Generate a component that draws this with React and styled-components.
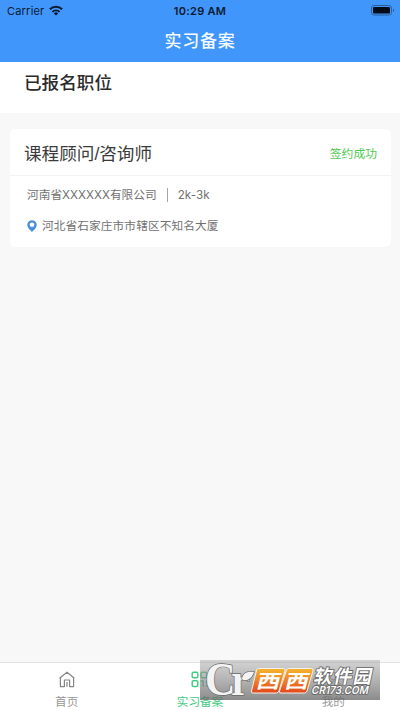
import styled, { createGlobalStyle } from 'styled-components';

const GlobalStyle = createGlobalStyle`
  * {
    box-sizing: border-box;
  }

  body {
    margin: 0;
    background: #f8f8f8;
    font-family: Inter, 'Noto Sans CJK SC', sans-serif;
  }
`;

const Page = styled.div`
  position: relative;
  display: flex;
  flex-direction: column;
  width: 400px;
  height: 710px;
  overflow: hidden;
  background: #f8f8f8;
`;

const Header = styled.header`
  height: 62px;
  background: #4196fb;
`;

const StatusBar = styled.div`
  display: grid;
  grid-template-columns: 1fr auto 1fr;
  align-items: center;
  height: 20px;
  padding: 1px 5px 0 7px;
  color: #0b1a30;
  font-size: 11px;
  line-height: 14px;

  .carrier {
    display: flex;
    align-items: center;
    gap: 5px;
    letter-spacing: 0.2px;
  }

  .time {
    margin-left: -2px;
    font-weight: 600;
    letter-spacing: 0.3px;
  }

  .battery {
    justify-self: end;
  }

  svg {
    display: block;
  }
`;

const NavTitle = styled.h1`
  margin: 0;
  color: #f4faff;
  font-size: 17px;
  font-weight: 500;
  line-height: 42px;
  letter-spacing: 0.7px;
  text-align: center;
`;

const SectionTitle = styled.h2`
  height: 51px;
  margin: 0;
  padding-left: 24px;
  background: #fff;
  color: #2b2b2b;
  font-size: 17.6px;
  font-weight: 500;
  line-height: 41px;
`;

const Content = styled.main`
  flex: 1;
  padding: 16px 9px 0 10px;
`;

const Card = styled.section`
  height: 118px;
  border-radius: 5px;
  background: #fff;
`;

const CardHead = styled.div`
  display: flex;
  align-items: center;
  justify-content: space-between;
  height: 47px;
  padding: 3px 14px 0 14px;
  border-bottom: 1px solid #f3f3f3;
`;

const JobName = styled.span`
  color: #3b3b3b;
  font-family: 'Liberation Sans', 'Noto Sans CJK SC', sans-serif;
  font-size: 17.6px;
  line-height: 24px;
`;

const State = styled.span`
  color: #4fca50;
  font-size: 11.8px;
  line-height: 18px;
`;

const Row = styled.div`
  display: flex;
  align-items: center;
  height: ${({ $height }) => $height}px;
  padding-left: 17px;
  color: #727272;
  font-size: 11.7px;
  line-height: 18px;

  svg {
    margin-right: 5px;
  }
`;

const Address = styled.span`
  letter-spacing: 0.08px;
`;

const Divider = styled.i`
  width: 1px;
  height: 14px;
  margin: 0 10px;
  background: #a5a5a5;
`;

const TabBar = styled.nav`
  display: grid;
  grid-template-columns: repeat(3, 1fr);
  height: 48px;
  border-top: 1px solid #e3e3e3;
  background: #fff;
`;

const Tab = styled.div`
  display: flex;
  flex-direction: column;
  align-items: center;
  padding-top: 8px;
  color: ${({ $active }) => ($active ? '#48cb85' : '#999')};
  font-size: 11.6px;
  line-height: 16px;

  svg {
    display: block;
    margin-bottom: 6px;
  }
`;

// 覆盖在底部导航上的站点标识
const SiteMark = styled.svg`
  position: absolute;
  left: 200px;
  top: 660px;
  overflow: visible;
`;

const WifiIcon = () => (
  <svg width="14" height="11" viewBox="0 0 14 11" fill="none" stroke="#0b1a30">
    <path d="M.9 4.3a8.7 8.7 0 0 1 12.2 0" strokeWidth="2" />
    <path d="M3.4 6.9a5.1 5.1 0 0 1 7.2 0" strokeWidth="1.8" />
    <path d="M7 10.5 4.9 8.4a3 3 0 0 1 4.2 0z" fill="#0b1a30" stroke="none" />
  </svg>
);

const BatteryIcon = () => (
  <svg className="battery" width="24" height="11" viewBox="0 0 24 11">
    <rect x=".5" y=".5" width="20" height="9.5" rx="2.6" fill="none" stroke="#285d9b" />
    <rect x="2" y="2" width="17" height="6.5" rx="1.2" fill="#020b18" />
    <path d="M22 3.7c1.5.4 1.5 2.7 0 3.1z" fill="#285d9b" />
  </svg>
);

const PinIcon = () => (
  <svg width="10" height="13" viewBox="0 0 10 13">
    <path
      d="M5 .2A4.7 4.7 0 0 0 .3 4.9C.3 8 3.3 9.8 5 12c1.7-2.2 4.7-4 4.7-7.1A4.7 4.7 0 0 0 5 .2zm0 2.3a2.3 2.3 0 1 1 0 4.6 2.3 2.3 0 0 1 0-4.6z"
      fill="#4a90d9"
      fillRule="evenodd"
    />
  </svg>
);

const HomeIcon = () => (
  <svg width="18" height="17" viewBox="0 0 18 17" fill="none" stroke="#858585" strokeWidth="1.2">
    <path d="M1.6 7.2 9 1.2l7.4 6M2.4 6.8v8.8h4V9h5.2v6.6h4V6.8M9 11v4.8" strokeLinejoin="round" />
  </svg>
);

const GridIcon = () => (
  <svg width="17" height="17" viewBox="0 0 17 17" fill="none" stroke="#48cb85" strokeWidth="1.5">
    <rect x="1.2" y="1.2" width="5.6" height="5.6" rx="1.2" />
    <rect x="10" y="1.2" width="5.6" height="5.6" rx="1.2" />
    <rect x="1.2" y="9.8" width="5.6" height="5.6" rx="1.2" />
    <path d="M9.5 10h2.6v5.8M15.6 9.5v3.2M15.6 14.2v1.6" />
  </svg>
);

const UserIcon = () => (
  <svg width="17" height="17" viewBox="0 0 17 17" fill="none" stroke="#999" strokeWidth="1.2">
    <circle cx="8.5" cy="5" r="3.6" />
    <path d="M1.5 16c0-8 14-8 14 0" />
  </svg>
);

const Mark = () => (
  <SiteMark width="180" height="40" viewBox="0 0 180 40">
    <defs>
      <linearGradient id="plate" x1="0" y1="0" x2="0" y2="1">
        <stop offset="0" stopColor="#a8a8a8" stopOpacity=".5" />
        <stop offset=".5" stopColor="#888" stopOpacity=".64" />
        <stop offset="1" stopColor="#666" stopOpacity=".76" />
      </linearGradient>
      <linearGradient id="tile" x1="0" y1="0" x2="0" y2="1">
        <stop offset="0" stopColor="#f4b52e" />
        <stop offset=".5" stopColor="#ee8127" />
        <stop offset="1" stopColor="#e4451d" />
      </linearGradient>
    </defs>
    <rect width="180" height="40" fill="url(#plate)" />
    <g fill="#f3f3f3" stroke="#6a6a6a" strokeWidth="1.4" paintOrder="stroke">
      <text
        transform="translate(5 35) scale(.92 1)"
        fontFamily="Liberation Serif, serif"
        fontSize="46"
        fontWeight="700"
        letterSpacing="-5"
      >
        Cr
      </text>
      <path d="M42 19c1-6 5-8 12-7-2 6-6 9-11 8z" />
    </g>
    <g stroke="#f4f1eb" strokeWidth="1">
      <path d="M58.5 8.5h25q2 0 1.5 2L79 31q-.6 2-2.6 2H53q-2 0-1.5-2L56.6 10q.5-1.5 1.9-1.5z" fill="url(#tile)" />
      <path d="M88.5 8.5h23q2 0 1.5 2L107 31q-.6 2-2.6 2H81q-2 0-1.5-2L86.6 10q.5-1.5 1.9-1.5z" fill="url(#tile)" />
    </g>
    <g fill="#fff" fontFamily="Noto Sans CJK SC, sans-serif" fontWeight="700" fontSize="19">
      <text transform="translate(55.5 27.5) skewX(-14) scale(1.25 1)">西</text>
      <text transform="translate(84 27.5) skewX(-14) scale(1.25 1)">西</text>
    </g>
    <g fill="#fff" stroke="#666" strokeWidth="1.7" paintOrder="stroke">
      <text
        transform="translate(113 22.5) skewX(-12)"
        fontSize="18.5"
        fontWeight="700"
        fontFamily="Noto Sans CJK SC, sans-serif"
        textLength="58"
      >
        软件园
      </text>
      <text
        transform="translate(111 34) skewX(-12)"
        fontSize="11"
        fontWeight="600"
        fontFamily="Inter, sans-serif"
        textLength="57"
        lengthAdjust="spacingAndGlyphs"
      >
        CR173.COM
      </text>
    </g>
  </SiteMark>
);

const App = () => {
  return (
    <>
      <GlobalStyle />
      <Page>
        <Header>
          <StatusBar>
            <span className="carrier">
              Carrier
              <WifiIcon />
            </span>
            <span className="time">10:29 AM</span>
            <BatteryIcon />
          </StatusBar>
          <NavTitle>实习备案</NavTitle>
        </Header>
        <SectionTitle>已报名职位</SectionTitle>
        <Content>
          <Card>
            <CardHead>
              <JobName>课程顾问/咨询师</JobName>
              <State>签约成功</State>
            </CardHead>
            <Row $height={37}>
              河南省XXXXXX有限公司
              <Divider />
              2k-3k
            </Row>
            <Row $height={26}>
              <PinIcon />
              <Address>河北省石家庄市市辖区不知名大厦</Address>
            </Row>
          </Card>
        </Content>
        <TabBar>
          <Tab>
            <HomeIcon />
            首页
          </Tab>
          <Tab $active>
            <GridIcon />
            实习备案
          </Tab>
          <Tab>
            <UserIcon />
            我的
          </Tab>
        </TabBar>
        <Mark />
      </Page>
    </>
  );
};

export default App;
